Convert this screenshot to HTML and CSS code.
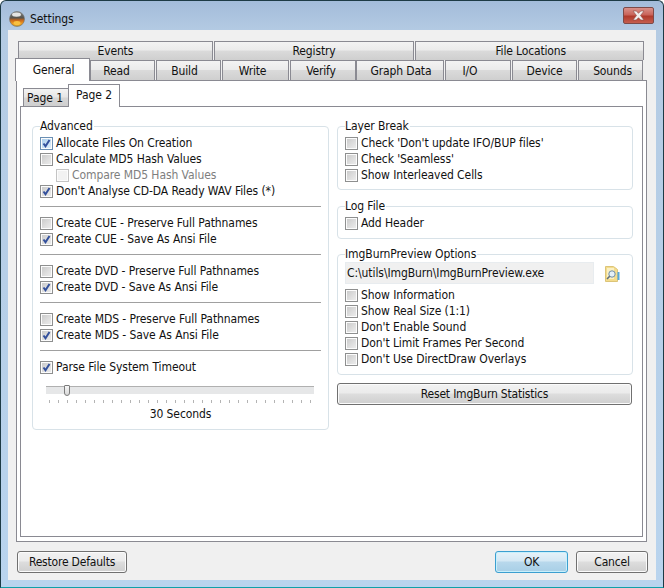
FILE: index.html
```html
<!DOCTYPE html>
<html lang="en">
<head>
<meta charset="utf-8">
<title>Settings</title>
<link rel="stylesheet" href="styles.css">
</head>
<body>
<div class="window">
  <header class="titlebar">
    <svg class="appicon" width="16" height="16" viewBox="0 0 16 16">
      <defs>
        <linearGradient id="orb" x1="0" y1="0" x2="0" y2="1">
          <stop offset="0" stop-color="#8a8a88"/><stop offset=".42" stop-color="#55544e"/><stop offset=".58" stop-color="#c8681c"/><stop offset=".8" stop-color="#ee9a20"/><stop offset="1" stop-color="#c8a030"/>
        </linearGradient>
      </defs>
      <circle cx="8" cy="8" r="7.500" fill="url(#orb)" stroke="#70706c" stroke-width=".6"/>
      <ellipse cx="7.500" cy="3.600" rx="4.500" ry="2.200" fill="#e4e4e2"/>
      <ellipse cx="8" cy="12" rx="3.500" ry="2" fill="#f8c040"/>
    </svg>
    <span class="title">Settings</span>
    <div class="close"><svg width="15" height="11" viewBox="0 0 15 11"><path d="M2 1h3.200l2.300 2.300L9.800 1H13L9.500 5.500 13 10H9.800L7.500 7.700 5.200 10H2l3.500-4.500z" fill="#f2eeee" stroke="#8a4a44" stroke-width=".6"/></svg></div>
  </header>
  <main class="client">
    <div class="tabrow row-back">
      <div class="tab w-events">Events</div>
      <div class="tab w-registry">Registry</div>
      <div class="tab w-files">File Locations</div>
    </div>
    <div class="tabrow row-front">
      <div class="tab active w-general">General</div>
      <div class="tab w-read">Read</div>
      <div class="tab w-build">Build</div>
      <div class="tab w-write">Write</div>
      <div class="tab w-verify">Verify</div>
      <div class="tab w-graph">Graph Data</div>
      <div class="tab w-io">I/O</div>
      <div class="tab w-device">Device</div>
      <div class="tab w-sounds">Sounds</div>
    </div>
    <section class="panel">
      <div class="subtabs">
        <div class="subtab">Page 1</div>
        <div class="subtab active">Page 2</div>
      </div>
      <div class="subpanel">
        <div class="column">
          <fieldset class="group g-advanced">
            <legend>Advanced</legend>
            <div class="row"><span class="box on"><svg width="11" height="11" viewBox="0 0 11 11"><path d="M2.500 5.500l2 2.800 4-6.300" class="tick"/></svg></span>Allocate Files On Creation</div>
            <div class="row"><span class="box"></span>Calculate MD5 Hash Values</div>
            <div class="row indent disabled"><span class="box"></span>Compare MD5 Hash Values</div>
            <div class="row"><span class="box"><svg width="11" height="11" viewBox="0 0 11 11"><path d="M2.500 5.500l2 2.800 4-6.300" class="tick"/></svg></span>Don't Analyse CD-DA Ready WAV Files (*)</div>
            <hr class="sep">
            <div class="row"><span class="box"></span>Create CUE - Preserve Full Pathnames</div>
            <div class="row"><span class="box"><svg width="11" height="11" viewBox="0 0 11 11"><path d="M2.500 5.500l2 2.800 4-6.300" class="tick"/></svg></span>Create CUE - Save As Ansi File</div>
            <hr class="sep">
            <div class="row"><span class="box"></span>Create DVD - Preserve Full Pathnames</div>
            <div class="row"><span class="box"><svg width="11" height="11" viewBox="0 0 11 11"><path d="M2.500 5.500l2 2.800 4-6.300" class="tick"/></svg></span>Create DVD - Save As Ansi File</div>
            <hr class="sep">
            <div class="row"><span class="box"></span>Create MDS - Preserve Full Pathnames</div>
            <div class="row"><span class="box"><svg width="11" height="11" viewBox="0 0 11 11"><path d="M2.500 5.500l2 2.800 4-6.300" class="tick"/></svg></span>Create MDS - Save As Ansi File</div>
            <hr class="sep">
            <div class="row"><span class="box"><svg width="11" height="11" viewBox="0 0 11 11"><path d="M2.500 5.500l2 2.800 4-6.300" class="tick"/></svg></span>Parse File System Timeout</div>
            <div class="slider">
              <div class="track"><span class="thumb"></span></div>
              <div class="ticks"></div>
            </div>
            <div class="slider-value">30 Seconds</div>
          </fieldset>
        </div>
        <div class="column">
          <fieldset class="group g-layer">
            <legend>Layer Break</legend>
            <div class="row"><span class="box"></span>Check 'Don't update IFO/BUP files'</div>
            <div class="row"><span class="box"></span>Check 'Seamless'</div>
            <div class="row"><span class="box"></span>Show Interleaved Cells</div>
          </fieldset>
          <fieldset class="group g-log">
            <legend>Log File</legend>
            <div class="row"><span class="box"></span>Add Header</div>
          </fieldset>
          <fieldset class="group g-preview">
            <legend>ImgBurnPreview Options</legend>
            <div class="pathline">
              <div class="path">C:\utils\ImgBurn\ImgBurnPreview.exe</div>
              <svg class="folder" width="15" height="16" viewBox="0 0 15 16">
                <path d="M.5 15.500V.5h8l4 3v12z" fill="#f4dc8c" stroke="#dcc478"/>
                <rect x="2" y="2" width="7" height="11" fill="#faf0c4"/>
                <rect x="12.500" y="6" width="2" height="8" fill="#58a8d8"/>
                <circle cx="7" cy="8" r="3.200" fill="#e4f0f8" stroke="#6f8ca4"/>
                <path d="M4.700 10.300L2 13" stroke="#5f6d78" stroke-width="1.600"/>
              </svg>
            </div>
            <div class="row"><span class="box"></span>Show Information</div>
            <div class="row"><span class="box"></span>Show Real Size (1:1)</div>
            <div class="row"><span class="box"></span>Don't Enable Sound</div>
            <div class="row"><span class="box"></span>Don't Limit Frames Per Second</div>
            <div class="row"><span class="box"></span>Don't Use DirectDraw Overlays</div>
          </fieldset>
          <button class="btn reset" type="button">Reset ImgBurn Statistics</button>
        </div>
      </div>
    </section>
    <footer class="actions">
      <button class="btn restore" type="button">Restore Defaults</button>
      <div class="spacer"></div>
      <button class="btn ok" type="button">OK</button>
      <button class="btn cancel" type="button">Cancel</button>
    </footer>
  </main>
</div>
</body>
</html>
```

FILE: styles.css
```css
* { box-sizing: border-box; }
html, body { margin: 0; padding: 0; background: #fff; }
body {
  width: 664px; height: 588px; overflow: hidden;
  font-family: "DejaVu Sans Condensed", "DejaVu Sans", sans-serif;
  font-size: 12px; letter-spacing: -0.08px; color: #111;
}
.window {
  width: 664px; height: 588px;
  display: flex; flex-direction: column;
  border: 1px solid #1d3a45; border-bottom-color: #10a0a8;
  border-radius: 6px 6px 0 0;
  background: linear-gradient(180deg, #a3bcda 0, #b4cbe3 30px, #b9d4ee 100%);
  padding: 0 7px 7px;
}
.titlebar { height: 29px; flex: none; display: flex; align-items: center; padding: 6px 2px 0 1px; }
.appicon { flex: none; margin-right: 5px; }
.title { flex: 1; color: #111; }
.close {
  width: 31px; height: 17px; margin-top: -6px;
  display: flex; align-items: center; justify-content: center;
  background: linear-gradient(180deg, #d9918a 0, #c9645a 45%, #b03a2c 55%, #c55e4e 100%);
  border: 1px solid #7d4a48; border-radius: 2px;
}
.client {
  flex: 1; min-height: 0; background: #f0f0f0;
  padding: 11px 9px 0 8px;
  display: flex; flex-direction: column;
}
.tabrow { display: flex; flex: none; }
.row-back { height: 19px; padding-left: 2px; gap: 1px; width: 628px; }
.row-front { height: 20px; gap: 1px; align-items: flex-end; position: relative; z-index: 1; }
.tab {
  height: 100%; display: flex; align-items: center; justify-content: center;
  letter-spacing: -0.15px;
  background: linear-gradient(180deg, #f3f3f3 0, #ebebeb 45%, #dadada 50%, #cfcfcf 100%);
  border: 1px solid #8a8a92; border-bottom: 0;
}
.w-events { width: 195px; } .w-registry { width: 201px; } .w-files { width: 229px; padding-left: 2px; }
.w-general { width: 75px; } .w-read { width: 65px; margin-left: -1px; padding-right: 12px; }
.w-build { width: 65px; padding-right: 8px; }
.w-write { width: 67px; padding-right: 6px; } .w-verify { width: 66px; padding-right: 4px; }
.w-graph { width: 88px; margin-left: -1px; padding-left: 2px; }
.w-io { width: 66px; padding-right: 16px; } .w-device { width: 65px; } .w-sounds { width: 65px; padding-left: 4px; }
.tab.active {
  height: 23px; background: #fff; margin-bottom: -1px; padding: 0 0 0 2px;
  margin-left: -1px;
}
.panel {
  width: 631px; height: 462px; flex: none; background: #fff;
  border: 1px solid #8a8a92; padding: 3px 3px 4px;
  display: flex; flex-direction: column;
}
.subtabs { height: 22px; flex: none; display: flex; align-items: flex-end; padding-left: 3px; position: relative; z-index: 1; }
.subtab {
  width: 46px; height: 18px; display: flex; align-items: center; justify-content: center;
  background: linear-gradient(180deg, #f3f3f3 0, #e6e6e6 45%, #d6d6d6 55%, #cfcfcf 100%);
  border: 1px solid #8a8a92; border-bottom: 0; padding-right: 2px;
}
.subtab.active {
  width: 52px; height: 23px; margin-left: -1px; margin-bottom: -1px; background: #fff; padding: 0 0 2px;
}
.subpanel {
  flex: 1; min-height: 0; border: 1px solid #8a8a92; background: #fff;
  padding: 12px 9px 0 11px; display: flex; gap: 8px;
}
.column { width: 297px; flex: none; display: flex; flex-direction: column; }
.column + .column { width: 296px; }
.group {
  margin: 0; padding: 2px 7px 0; min-width: 0;
  border: 1px solid #d8e2e8; border-radius: 4px;
}
.group legend { padding: 0 1px 0 0; margin-left: 0; line-height: 14px; height: 14px; }
.g-advanced { height: 311px; }
.g-layer { height: 71px; }
.g-log { height: 40px; margin-top: 9px; }
.g-preview { height: 128px; margin-top: 8px; }
.row { height: 16px; display: flex; align-items: center; line-height: 16px; white-space: nowrap; }
.indent { padding-left: 16px; }
.disabled { color: #7e7e7e; }
.box {
  width: 13px; height: 13px; flex: none; margin-right: 3px;
  border: 1px solid #8e8f8f;
  background: linear-gradient(135deg, #c8c8c8 0, #e0e0e0 60%, #eeeeee 100%);
  box-shadow: inset 0 0 0 1px #fcfcfc;
  display: flex; align-items: center; justify-content: center;
}
.box.on { border-color: #6a8fb4; background: linear-gradient(135deg, #a8cceb, #e4f2fc); }
.disabled .box { border-color: #c4c4c4; background: #f2f2f2; }
.tick { fill: none; stroke: #33509c; stroke-width: 2; }
.sep { height: 1px; border: 0; margin: 7px 0 8px; background: #a0a0a0; }
.slider { padding: 11px 0 0 6px; }
.track {
  width: 268px; height: 8px; position: relative;
  background: #e6e7e8; border-top: 1px solid #b0b0b0;
}
.thumb {
  position: absolute; left: 18px; top: -2px; width: 6px; height: 11px;
  background: linear-gradient(180deg, #f6f6f6, #d8d8d8);
  border: 1px solid #7c7c7c; border-radius: 1px 1px 3px 3px;
}
.ticks {
  width: 264px; height: 3px; margin: 6px 0 0 3px;
  background: repeating-linear-gradient(90deg, #b4b4b4 0, #b4b4b4 1px, transparent 1px, transparent 9px);
}
.slider-value { text-align: center; line-height: 16px; margin-top: 3px; }
.pathline { display: flex; align-items: center; height: 22px; margin: -1px 0 3px; }
.path {
  width: 249px; height: 22px; line-height: 20px; padding-left: 1px;
  background: #f0f0f0; border: 1px solid #e8ecef; white-space: nowrap;
}
.folder { margin-left: 11px; margin-top: 2px; }
.btn {
  font: inherit; letter-spacing: -0.2px; color: #111; height: 22px; padding: 0; flex: none;
  background: linear-gradient(180deg, #f2f2f2 0, #ebebeb 45%, #dddddd 50%, #cfcfcf 100%);
  border: 1px solid #707070; border-radius: 3px;
  box-shadow: inset 0 0 0 1px #fbfbfb;
}
.reset { width: 295px; margin-top: 8px; }
.actions { flex: none; display: flex; padding: 9px 0 0 1px; width: 632px; }
.spacer { flex: 1; }
.restore { width: 110px; }
.ok { width: 73px; border-color: #3c9fd0; background: linear-gradient(180deg, #e6f2f9 0, #d4e8f4 45%, #b8d8ec 50%, #a8cfe6 100%); box-shadow: inset 0 0 0 1px #c8f0fc; }
.cancel { width: 72px; margin-left: 8px; }
```
